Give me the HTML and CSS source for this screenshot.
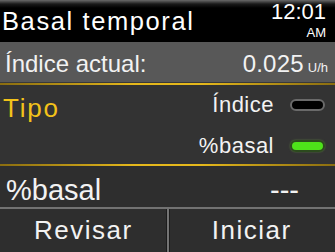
FILE: index.html
```html
<!DOCTYPE html>
<html lang="es">
<head>
    <meta charset="UTF-8">
    <title>Basal temporal</title>
    <link rel="stylesheet" href="styles.css">
</head>
<body>
    <div class="screen">
        <div class="header">
            <div class="title">Basal temporal</div>
            <div class="clock">
                <div class="time">12:01</div>
                <div class="ampm">AM</div>
            </div>
        </div>
        <div class="current">
            <span class="current-label">Índice actual:</span>
            <span class="rate">0.025<small>U/h</small></span>
        </div>
        <div class="gold"></div>
        <div class="panel">
            <div class="label">Tipo</div>
            <div class="options">
                <div class="option">Índice <span class="pill"></span></div>
                <div class="option">%basal <span class="pill on"></span></div>
            </div>
        </div>
        <div class="gold"></div>
        <div class="value-row">
            <span>%basal</span>
            <span class="dashes">---</span>
        </div>
        <div class="buttons">
            <div class="btn">Revisar</div>
            <div class="btn">Iniciar</div>
        </div>
    </div>
</body>
</html>
```

FILE: styles.css
```css
*{
    margin: 0;
    padding: 0;
    box-sizing: border-box;
}
body{
    background: #2e2e2e;
    font-family: "Liberation Sans", Arial, sans-serif;
    color: #f2f2f2;
}
.screen{
    width: 335px;
    height: 252px;
    display: flex;
    flex-direction: column;
    overflow: hidden;
}
.header{
    height: 42px;
    flex: none;
    background: linear-gradient(#6a6a6a 0, #1a1a1a 4px, #000 8px);
    display: flex;
    justify-content: space-between;
    padding: 0 9px 0 2px;
}
.title{
    font-size: 25.5px;
    line-height: 26px;
    letter-spacing: 1.6px;
    padding-top: 8px;
    color: #fff;
}
.clock{
    text-align: right;
    color: #fff;
}
.time{
    font-size: 22px;
    line-height: 22px;
    padding-top: 1px;
}
.ampm{
    font-size: 13px;
    line-height: 14px;
    margin-top: 3px;
}
.current{
    height: 41px;
    flex: none;
    background: #585858;
    display: flex;
    justify-content: space-between;
    align-items: baseline;
    padding: 10px 7px 0 5px;
    border-bottom: 1px solid #3a3a3a;
}
.current-label{
    font-size: 24px;
    line-height: 24px;
}
.rate{
    font-size: 24px;
    line-height: 24px;
    letter-spacing: 0.2px;
}
.rate small{
    font-size: 13px;
    letter-spacing: 0;
    margin-left: 4px;
}
.gold{
    height: 2px;
    flex: none;
    background: linear-gradient(90deg, #8a6d10, #e5b81c 40%, #e5b81c 60%, #8a6d10);
}
.panel{
    height: 79px;
    flex: none;
    background: #333;
    display: flex;
    justify-content: space-between;
    padding: 10px 10px 0 3px;
}
.label{
    color: #f2c21a;
    font-size: 26px;
    line-height: 26px;
    letter-spacing: 1.8px;
}
.options{
    display: flex;
    flex-direction: column;
    align-items: flex-end;
    gap: 19px;
    margin-top: -1px;
}
.option{
    font-size: 22px;
    line-height: 22px;
    letter-spacing: 0.5px;
    display: flex;
    align-items: center;
    gap: 16px;
}
.pill{
    width: 35px;
    height: 12px;
    border-radius: 6px;
    background: #000;
    border: 2px solid #6a6a6a;
}
.pill.on{
    background: #4ee21a;
    border-color: #2c4a1e;
    box-shadow: 0 0 2px #5b7a40;
}
.value-row{
    height: 43px;
    flex: none;
    display: flex;
    align-items: baseline;
    padding: 10px 36px 0 6px;
    justify-content: space-between;
    font-size: 29px;
    line-height: 29px;
    border-bottom: 2px solid #727272;
}
.buttons{
    flex: 1;
    display: flex;
}
.btn{
    flex: 1;
    text-align: center;
    font-size: 26px;
    line-height: 26px;
    letter-spacing: 1.5px;
    padding-top: 8px;
}
.btn + .btn{
    border-left: 2px solid #747474;
    box-shadow: -1px 0 0 #1c1c1c, inset 1px 0 0 #1c1c1c;
}
```
